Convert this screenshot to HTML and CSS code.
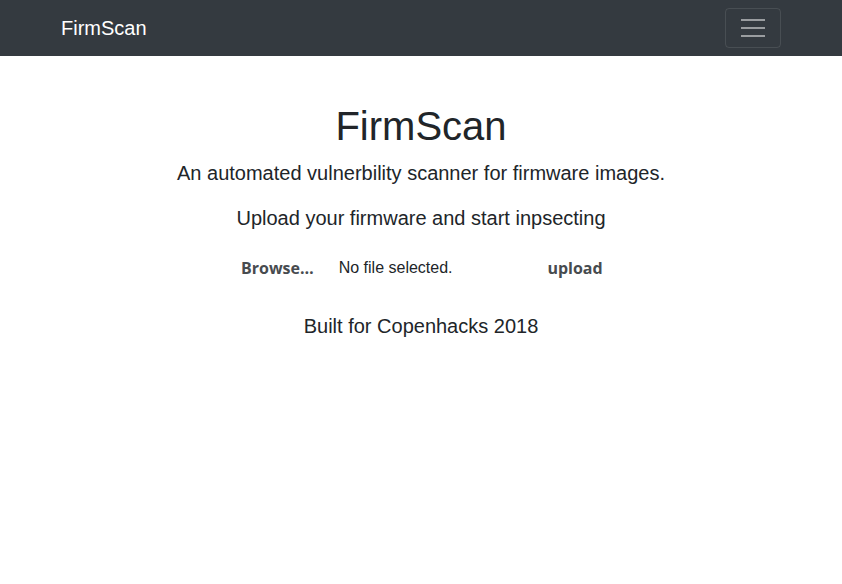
FILE: index.html
```html
<!DOCTYPE html>
<html>
<head>
<meta charset="utf-8">
<title>FirmScan</title>
<link rel="stylesheet" href="styles.css">
</head>
<body>
<nav class="navbar">
  <div class="nav-inner">
    <a class="brand" href="#">FirmScan</a>
    <button class="toggler" type="button" aria-label="Toggle navigation">
      <svg width="30" height="30" viewBox="0 0 30 30"><path stroke="rgba(255,255,255,0.5)" stroke-width="2" stroke-linecap="butt" d="M3 7h24M3 15h24M3 23h24"/></svg>
    </button>
  </div>
</nav>
<main class="main">
  <h1 class="title">FirmScan</h1>
  <p class="lead">An automated vulnerbility scanner for firmware images.</p>
  <h5 class="upload-title">Upload your firmware and start inpsecting</h5>
  <form class="upload-form">
    <div class="file-box">
      <span class="btn-text browse">Browse…</span>
      <span class="file-name">No file selected.</span>
    </div>
    <div class="submit-box">
      <span class="btn-text">upload</span>
    </div>
  </form>
  <p class="footer-note">Built for Copenhacks 2018</p>
</main>
</body>
</html>
```
FILE: styles.css
```css
* { box-sizing: border-box; }
html, body { margin: 0; padding: 0; background: #fff; }
body {
  font-family: "Liberation Sans", Arial, sans-serif;
  font-size: 16px;
  line-height: 1.5;
  color: #212529;
}
.navbar {
  background: #343a40;
  height: 56px;
}
.nav-inner {
  width: 720px;
  margin: 0 auto;
  height: 56px;
  display: flex;
  align-items: center;
  justify-content: space-between;
}
.brand {
  color: #fff;
  font-size: 20px;
  text-decoration: none;
  line-height: 30px;
}
.toggler {
  width: 56px;
  height: 40px;
  padding: 0;
  background: transparent;
  border: 1px solid rgba(255,255,255,0.1);
  border-radius: 4px;
  display: flex;
  align-items: center;
  justify-content: center;
}
.toggler svg { display: block; }
.main {
  text-align: center;
  padding-top: 46px;
}
.title {
  font-size: 40px;
  font-weight: 500;
  line-height: 1.2;
  margin: 0 0 8px;
}
.lead {
  font-size: 20px;
  font-weight: 300;
  margin: 0 0 18px;
}
.upload-title {
  font-size: 20px;
  font-weight: 500;
  line-height: 1.2;
  margin: 0 0 8px;
}
.upload-form {
  display: flex;
  justify-content: center;
  align-items: center;
  height: 52px;
  margin: 12px 0 17px;
}
.file-box {
  display: flex;
  align-items: center;
  width: 308px;
  height: 34px;
}
.btn-text {
  font-family: "Open Sans", "DejaVu Sans", sans-serif;
  font-weight: 700;
  font-size: 16px;
  color: #474b4f;
}
.browse { margin-left: 19px; margin-right: 25px; }
.file-name { font-size: 16px; }
.submit-box {
  width: 90px;
  text-align: center;
}
.footer-note {
  font-size: 20px;
  margin: 0;
}
```
